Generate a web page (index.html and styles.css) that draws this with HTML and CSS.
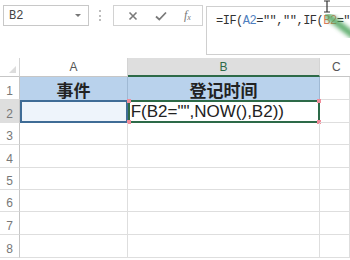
FILE: index.html
```html
<!DOCTYPE html>
<html>
<head>
<meta charset="utf-8">
<link rel="stylesheet" href="styles.css">
</head>
<body>
<div class="app">
  <div class="toolbar">
    <div class="namebox"><span class="nb-text">B2</span><span class="nb-arrow"></span></div>
    <div class="sep"></div>
    <div class="fbtns">
      <svg class="ico" width="10" height="10" viewBox="0 0 10 10"><path d="M1.5 1.5L8.5 8.5M8.5 1.5L1.5 8.5" stroke="#7a7a7a" stroke-width="1.6"/></svg>
      <svg class="ico" width="12" height="10" viewBox="0 0 12 10"><path d="M1 5.5L4.3 8.5L11 1.5" stroke="#7a7a7a" stroke-width="1.8" fill="none"/></svg>
      <span class="fx">f<sub>x</sub></span>
    </div>
    <div class="fbox"><span class="ftext">=IF(<span class="ref-a">A2</span>="","",IF(<span class="ref-b">B2</span>="</span></div>
  </div>
  <div class="sheet">
    <div class="corner"><span class="tri"></span></div>
    <div class="colh">A</div>
    <div class="colh sel">B</div>
    <div class="colh c">C</div>

    <div class="rowh">1</div>
    <div class="cell hd">事件</div>
    <div class="cell hd">登记时间</div>
    <div class="cell"></div>

    <div class="rowh sel">2</div>
    <div class="cell a2"></div>
    <div class="cell b2"><span class="edit">IF(B2="",NOW(),B2))</span><i class="h tl"></i><i class="h tr"></i><i class="h bl"></i><i class="h br"></i></div>
    <div class="cell"></div>

    <div class="rowh">3</div><div class="cell"></div><div class="cell"></div><div class="cell"></div>
    <div class="rowh">4</div><div class="cell"></div><div class="cell"></div><div class="cell"></div>
    <div class="rowh">5</div><div class="cell"></div><div class="cell"></div><div class="cell"></div>
    <div class="rowh">6</div><div class="cell"></div><div class="cell"></div><div class="cell"></div>
    <div class="rowh">7</div><div class="cell"></div><div class="cell"></div><div class="cell"></div>
    <div class="rowh">8</div><div class="cell"></div><div class="cell"></div><div class="cell"></div>
  </div>
  <svg class="pointer" width="40" height="50" viewBox="0 0 40 50">
    <defs><filter id="bl"><feGaussianBlur stdDeviation="2.2"/></filter></defs>
    <path d="M8 16 L34 36" stroke="#4aa35a" stroke-width="7" stroke-linecap="round" filter="url(#bl)" opacity="0.85"/>
    <path d="M4 1 H10 M7 1 V12 M4 12 H10" stroke="#333" stroke-width="1.2" fill="none"/>
  </svg>
</div>
</body>
</html>
```

FILE: styles.css
```css
* { box-sizing: border-box; }
html, body { margin: 0; padding: 0; background: #fff; }
body { width: 350px; height: 260px; overflow: hidden; font-family: "Liberation Sans", Arial, sans-serif; }
.app { position: relative; width: 350px; height: 260px; overflow: hidden; }

.toolbar { display: flex; align-items: flex-start; height: 58px; padding: 5px 0 0 3px; }
.namebox { width: 86px; height: 21px; border: 1px solid #c8c8c8; display: flex; align-items: center; justify-content: space-between; padding: 0 5px 0 5px; }
.nb-text { font-family: "Liberation Mono", monospace; font-size: 12px; color: #444; }
.nb-arrow { width: 0; height: 0; border-left: 3px solid transparent; border-right: 3px solid transparent; border-top: 3px solid #777; margin-right: 2px; }
.sep { width: 2px; height: 11px; margin: 5px 0 0 10px; border-left: 2px dotted #bdbdbd; }
.fbtns { width: 90px; height: 21px; margin-left: 12px; border: 1px solid #d2d2d2; display: flex; align-items: center; padding-left: 14px; }
.fbtns .ico { display: block; }
.fbtns .ico + .ico { margin-left: 17px; }
.fx { font-family: "Liberation Serif", serif; font-style: italic; font-size: 12px; color: #777; margin-left: 17px; line-height: 1; }
.fx sub { font-size: 8px; vertical-align: -1px; }
.fbox { flex: 1; height: 49px; margin: 1px 0 0 3px; border: 1px solid #cfcfcf; border-right: 0; padding: 3px 0 0 9px; white-space: nowrap; overflow: hidden; }
.ftext { font-family: "Liberation Mono", monospace; font-size: 12px; color: #333; letter-spacing: -0.5px; }
.ref-a { color: #4f7fc0; }
.ref-b { color: #e0785a; }

.sheet { display: grid; grid-template-columns: 20px 108px 192px 30px; grid-template-rows: 19px 23px 23px 22px 23px 22px 22px 23px 23px; }
.corner { background: #fff; border-right: 1px solid #d4d4d4; border-bottom: 1px solid #c6c6c6; position: relative; }
.tri { position: absolute; right: 3px; bottom: 3px; width: 0; height: 0; border-left: 7px solid transparent; border-bottom: 7px solid #dcdcdc; }
.colh { background: #fff; border-right: 1px solid #d4d4d4; border-bottom: 1px solid #c6c6c6; font-size: 12px; color: #555; display: flex; align-items: center; justify-content: center; }
.colh.sel { background: #dedede; border-bottom: 2px solid #2d6a48; color: #2d6a48; }
.colh.c { border-right: 0; justify-content: flex-start; padding-left: 12px; }
.rowh { border-right: 1px solid #c6c6c6; border-bottom: 1px solid #dedede; font-size: 12px; color: #777; display: flex; align-items: flex-end; justify-content: center; padding-bottom: 1px; }
.rowh.sel { background: #dedede; }
.cell { border-right: 1px solid #dedede; border-bottom: 1px solid #dedede; position: relative; }
.cell.hd { background: #b9d2ec; border-right-color: #9fb9d4; border-bottom: 0; font-family: "Noto Sans CJK SC", sans-serif; font-weight: 700; font-size: 17px; color: #222; display: flex; align-items: center; justify-content: center; line-height: 1; padding-top: 1px; }
.cell.a2 { background: #eef4fb; border: 2px solid #3f6c96; }
.cell.b2 { border: 2px solid #2d6a48; overflow: visible; }
.edit { position: absolute; left: -4px; top: 0px; font-size: 17px; color: #222; white-space: nowrap; clip-path: inset(0 0 0 4px); }
.h { position: absolute; width: 4px; height: 4px; background: #f08c9a; }
.tl { left: -3px; top: -3px; }
.tr { right: -3px; top: -3px; }
.bl { left: -3px; bottom: -3px; }
.br { right: -3px; bottom: -3px; }

.pointer { position: absolute; left: 320px; top: 0; }
```
